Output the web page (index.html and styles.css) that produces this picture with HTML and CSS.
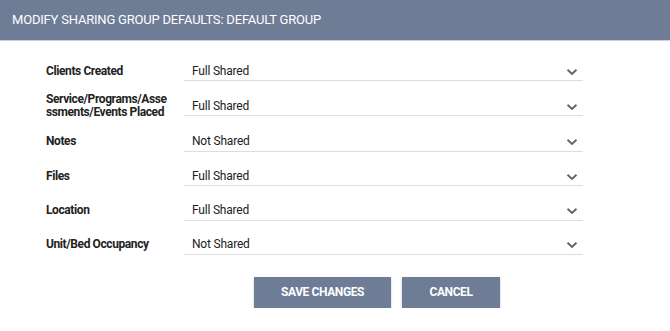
FILE: index.html
```html
<!DOCTYPE html>
<html>
<head>
<meta charset="utf-8">
<link rel="stylesheet" href="styles.css">
</head>
<body>
<div class="header">MODIFY SHARING GROUP DEFAULTS: DEFAULT GROUP</div>
<div class="form">
  <div class="row">
    <div class="label">Clients Created</div>
    <div class="select"><span>Full Shared</span><svg class="chev" width="12" height="8" viewBox="0 0 12 8"><path d="M1.5 1.8 L6 6 L10.5 1.8" fill="none" stroke="#666" stroke-width="2"/></svg></div>
  </div>
  <div class="row">
    <div class="label">Service/Programs/Asse<br>ssments/Events Placed</div>
    <div class="select"><span>Full Shared</span><svg class="chev" width="12" height="8" viewBox="0 0 12 8"><path d="M1.5 1.8 L6 6 L10.5 1.8" fill="none" stroke="#666" stroke-width="2"/></svg></div>
  </div>
  <div class="row">
    <div class="label">Notes</div>
    <div class="select"><span>Not Shared</span><svg class="chev" width="12" height="8" viewBox="0 0 12 8"><path d="M1.5 1.8 L6 6 L10.5 1.8" fill="none" stroke="#666" stroke-width="2"/></svg></div>
  </div>
  <div class="row">
    <div class="label">Files</div>
    <div class="select"><span>Full Shared</span><svg class="chev" width="12" height="8" viewBox="0 0 12 8"><path d="M1.5 1.8 L6 6 L10.5 1.8" fill="none" stroke="#666" stroke-width="2"/></svg></div>
  </div>
  <div class="row">
    <div class="label">Location</div>
    <div class="select"><span>Full Shared</span><svg class="chev" width="12" height="8" viewBox="0 0 12 8"><path d="M1.5 1.8 L6 6 L10.5 1.8" fill="none" stroke="#666" stroke-width="2"/></svg></div>
  </div>
  <div class="row">
    <div class="label">Unit/Bed Occupancy</div>
    <div class="select"><span>Not Shared</span><svg class="chev" width="12" height="8" viewBox="0 0 12 8"><path d="M1.5 1.8 L6 6 L10.5 1.8" fill="none" stroke="#666" stroke-width="2"/></svg></div>
  </div>
</div>
<div class="actions">
  <button class="btn save">SAVE CHANGES</button>
  <button class="btn cancel">CANCEL</button>
</div>
</body>
</html>
```
FILE: styles.css
```css
html, body {
  margin: 0;
  padding: 0;
  background: #ffffff;
  font-family: Roboto, "Liberation Sans", Arial, sans-serif;
}
.header {
  height: 41px;
  background: #6e7c96;
  color: #ffffff;
  font-size: 13px;
  letter-spacing: -0.2px;
  line-height: 39px;
  padding-left: 12px;
  box-sizing: border-box;
  border-bottom: 1px solid #c9ced8;
}
.form {
  display: flex;
  flex-direction: column;
  gap: 10.4px;
  padding: 16px 0 0 46px;
}
.row {
  display: flex;
  align-items: center;
}
.label {
  width: 138px;
  margin-top: 2px;
  margin-bottom: -2px;
  font-size: 12px;
  letter-spacing: -0.4px;
  font-weight: 700;
  color: #222;
  line-height: 13px;
}
.select {
  width: 399px;
  height: 24px;
  box-sizing: border-box;
  border-bottom: 1px solid #dddddd;
  display: flex;
  align-items: center;
  justify-content: space-between;
  padding: 4px 5px 0 8px;
  font-size: 12px;
  letter-spacing: -0.2px;
  color: #222;
}
.chev {
  display: block;
  margin-top: 2px;
}
.actions {
  display: flex;
  gap: 11px;
  padding: 22px 0 0 254px;
}
.btn {
  height: 31px;
  border: none;
  background: #6e7c96;
  color: #ffffff;
  font-family: Roboto, "Liberation Sans", Arial, sans-serif;
  font-size: 12px;
  letter-spacing: -0.4px;
  font-weight: 700;
  box-shadow: 0 1px 2px rgba(0,0,0,0.25);
  padding: 0;
}
.save { width: 137px; }
.cancel { width: 98px; }
```
